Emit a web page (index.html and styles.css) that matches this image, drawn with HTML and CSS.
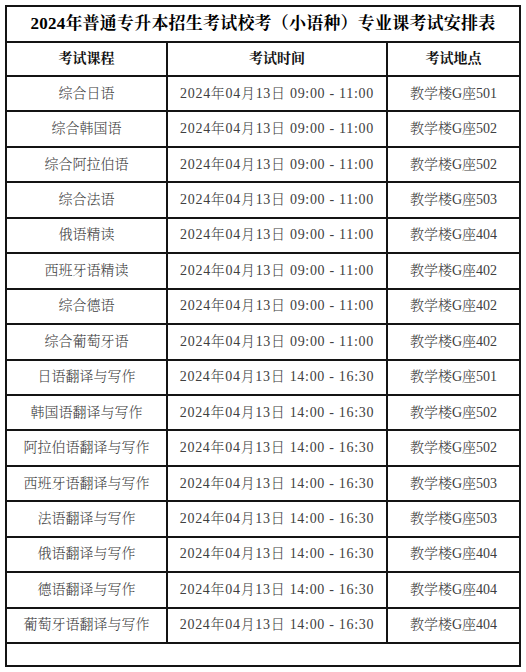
FILE: index.html
```html
<!DOCTYPE html>
<html lang="zh-CN">
<head>
<meta charset="utf-8">
<title>2024年普通专升本招生考试校考（小语种）专业课考试安排表</title>
<link rel="stylesheet" href="styles.css">
</head>
<body>
<table class="schedule">
  <colgroup>
    <col class="c-course">
    <col class="c-time">
    <col class="c-place">
  </colgroup>
  <thead>
    <tr class="title-row"><th colspan="3" class="title">2024年普通专升本招生考试校考（小语种）专业课考试安排表</th></tr>
    <tr class="head-row"><th>考试课程</th><th>考试时间</th><th>考试地点</th></tr>
  </thead>
  <tbody>
    <tr><td>综合日语</td><td class="time">2024年04月13日 09:00 - 11:00</td><td>教学楼G座501</td></tr>
    <tr><td>综合韩国语</td><td class="time">2024年04月13日 09:00 - 11:00</td><td>教学楼G座502</td></tr>
    <tr><td>综合阿拉伯语</td><td class="time">2024年04月13日 09:00 - 11:00</td><td>教学楼G座502</td></tr>
    <tr><td>综合法语</td><td class="time">2024年04月13日 09:00 - 11:00</td><td>教学楼G座503</td></tr>
    <tr><td>俄语精读</td><td class="time">2024年04月13日 09:00 - 11:00</td><td>教学楼G座404</td></tr>
    <tr><td>西班牙语精读</td><td class="time">2024年04月13日 09:00 - 11:00</td><td>教学楼G座402</td></tr>
    <tr><td>综合德语</td><td class="time">2024年04月13日 09:00 - 11:00</td><td>教学楼G座402</td></tr>
    <tr><td>综合葡萄牙语</td><td class="time">2024年04月13日 09:00 - 11:00</td><td>教学楼G座402</td></tr>
    <tr><td>日语翻译与写作</td><td class="time">2024年04月13日 14:00 - 16:30</td><td>教学楼G座501</td></tr>
    <tr><td>韩国语翻译与写作</td><td class="time">2024年04月13日 14:00 - 16:30</td><td>教学楼G座502</td></tr>
    <tr><td>阿拉伯语翻译与写作</td><td class="time">2024年04月13日 14:00 - 16:30</td><td>教学楼G座502</td></tr>
    <tr><td>西班牙语翻译与写作</td><td class="time">2024年04月13日 14:00 - 16:30</td><td>教学楼G座503</td></tr>
    <tr><td>法语翻译与写作</td><td class="time">2024年04月13日 14:00 - 16:30</td><td>教学楼G座503</td></tr>
    <tr><td>俄语翻译与写作</td><td class="time">2024年04月13日 14:00 - 16:30</td><td>教学楼G座404</td></tr>
    <tr><td>德语翻译与写作</td><td class="time">2024年04月13日 14:00 - 16:30</td><td>教学楼G座404</td></tr>
    <tr><td>葡萄牙语翻译与写作</td><td class="time">2024年04月13日 14:00 - 16:30</td><td>教学楼G座404</td></tr>
    <tr class="blank-row"><td colspan="3"></td></tr>
  </tbody>
</table>
</body>
</html>
```

FILE: styles.css
```css
html, body {
  margin: 0;
  padding: 0;
  background: #ffffff;
}

body {
  padding: 5px 0 0 5px;
  font-family: "Liberation Serif", "Noto Serif CJK SC", "Noto Sans CJK SC", serif;
  color: #333333;
}

.schedule {
  border-collapse: collapse;
  table-layout: fixed;
  width: 514px;
}

.c-course { width: 161px; }
.c-time { width: 220px; }
.c-place { width: 133px; }

.schedule th,
.schedule td {
  border: 2px solid #141414;
  padding: 0;
  text-align: center;
  vertical-align: middle;
  white-space: nowrap;
  font-size: 14px;
  line-height: 16px;
}

.schedule tbody td {
  height: 33.44px;
  color: #404040;
  font-weight: 300;
}

.schedule .title {
  height: 34px;
  font-size: 17px;
  font-weight: bold;
  color: #000000;
  letter-spacing: 0.2px;
}

.head-row th {
  height: 32px;
  font-weight: bold;
  color: #111111;
}

.schedule td.time {
  letter-spacing: 0.7px;
}

.schedule .blank-row td {
  height: 21px;
}
```
